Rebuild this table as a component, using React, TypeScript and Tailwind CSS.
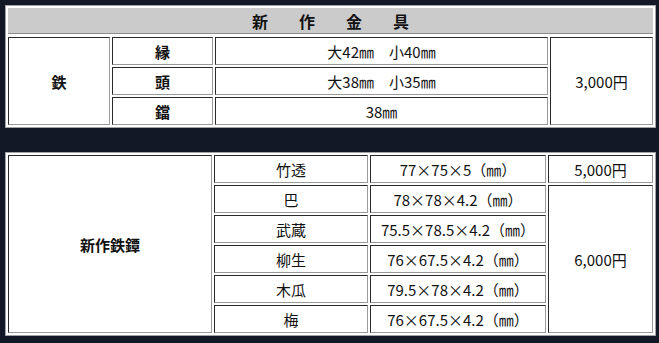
const cell =
  "flex items-center justify-center bg-white border border-t-[#2a2a2a] border-l-[#2a2a2a] border-b-[#9a9a9a] border-r-[#9a9a9a] text-[15px] leading-none text-[#111]"

const font = { fontFamily: '"Noto Sans CJK JP", "Noto Sans", sans-serif' }

const items = [
  { name: "巴", size: "78×78×4.2（㎜）" },
  { name: "武蔵", size: "75.5×78.5×4.2（㎜）" },
  { name: "柳生", size: "76×67.5×4.2（㎜）" },
  { name: "木瓜", size: "79.5×78×4.2（㎜）" },
  { name: "梅", size: "76×67.5×4.2（㎜）" },
]

export default function App() {
  return (
    <div className="min-h-[343px] w-[659px] bg-[#121826] pt-[5px] pl-[5px] font-['Noto_Sans_CJK_JP',sans-serif]">
      <div className="w-[651px] border border-[#a3a3a3] bg-white p-[2px]">
        <div className="mb-[3px] flex h-[26px] items-center justify-center gap-[31px] border-b border-[#8c8c8c] bg-[#cbcbcb] text-[16px] font-bold text-[#111]">
          <span>新</span>
          <span>作</span>
          <span>金</span>
          <span>具</span>
        </div>
        <div className="grid grid-cols-[102px_101px_333px_103px] grid-rows-[repeat(3,28px)] gap-[2px]">
          <div className={`${cell} row-span-3 font-bold`}>鉄</div>
          <div className={`${cell} font-bold`}>縁</div>
          <div className={cell}>大42㎜　小40㎜</div>
          <div className={`${cell} row-span-3`}>3,000円</div>
          <div className={`${cell} font-bold`}>頭</div>
          <div className={cell}>大38㎜　小35㎜</div>
          <div className={`${cell} font-bold`}>鐺</div>
          <div className={cell}>38㎜</div>
        </div>
      </div>

      <div className="mt-[24px] w-[651px] border border-[#a3a3a3] bg-white p-[2px]">
        <div className="grid grid-cols-[204px_154px_176px_105px] grid-rows-[repeat(6,28px)] gap-[2px]">
          <div className={`${cell} row-span-6 font-bold`}>新作鉄鐔</div>
          <div className={cell}>竹透</div>
          <div className={cell}>77×75×5（㎜）</div>
          <div className={cell}>5,000円</div>
          {items.map((it, i) => (
            <div key={it.name} className="contents">
              <div className={cell} style={font}>{it.name}</div>
              <div className={cell}>{it.size}</div>
              {i === 0 && <div className={`${cell} row-span-5`}>6,000円</div>}
            </div>
          ))}
        </div>
      </div>
    </div>
  )
}
